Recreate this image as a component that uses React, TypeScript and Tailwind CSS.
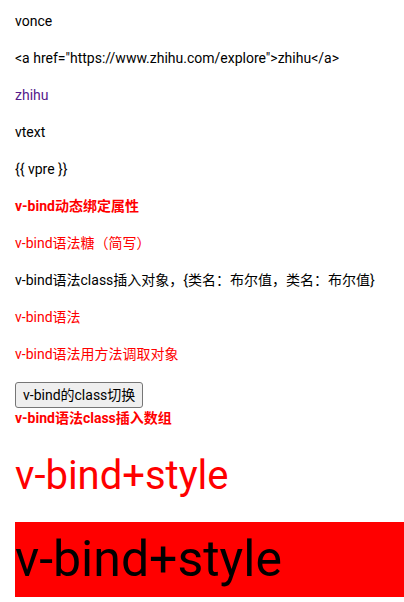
export default function App() {
  const font = "font-['Roboto','Noto_Sans_CJK_SC',sans-serif]";
  return (
    <div className={`${font} bg-white min-h-[602px] overflow-hidden pl-[15px] pt-[10px] text-[14px] text-black`}>
      <div className="flex flex-col gap-[15px]">
        <p className="leading-[22px]">vonce</p>
        <p className="leading-[22px]">{'<a href="https://www.zhihu.com/explore">zhihu</a>'}</p>
        <p className="leading-[22px]">
          <a href="#" className="text-[#551a8b]">zhihu</a>
        </p>
        <p className="leading-[22px]">vtext</p>
        <p className="leading-[22px]">{"{{ vpre }}"}</p>
        <p className="leading-[22px] font-bold text-[#ff0000]">v-bind动态绑定属性</p>
        <p className="leading-[22px] text-[#ff0000]">v-bind语法糖（简写）</p>
        <p className="leading-[22px] whitespace-nowrap">v-bind语法class插入对象，{"{"}类名：布尔值，类名：布尔值{"}"}</p>
        <p className="leading-[22px] text-[#ff0000]">v-bind语法</p>
        <p className="leading-[22px] text-[#ff0000]">v-bind语法用方法调取对象</p>
      </div>
      <div className="mt-[17px] flex flex-col items-start">
        <button className="h-[26px] px-[7px] bg-[#efefef] border border-[#767676] rounded-[3px] text-[14px] leading-[20px] text-black">
          v-bind的class切换
        </button>
        <p className="leading-[20px] font-bold text-[#ff0000]">v-bind语法class插入数组</p>
      </div>
      <h1 className="mt-[24px] text-[40px] leading-[48px] font-normal text-[#ff0000] whitespace-nowrap">v-bind+style</h1>
      <div className="mt-[22px] h-[75px] bg-[#ff0000] text-[50px] leading-[75px] text-black whitespace-nowrap">v-bind+style</div>
    </div>
  );
}
